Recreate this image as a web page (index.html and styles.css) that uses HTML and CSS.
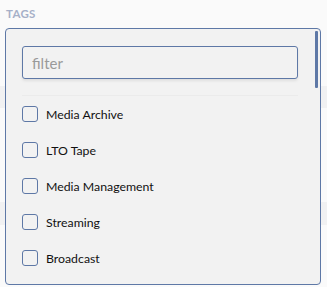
FILE: index.html
```html
<!DOCTYPE html>
<html lang="en">
<head>
  <meta charset="UTF-8" />
  <title>Tags</title>
  <link rel="stylesheet" href="styles.css">
</head>
<body>
  <div class="page">
    <div class="band band-top"></div>
    <div class="band band-bottom"></div>

    <label class="field-label">Tags</label>

    <div class="dropdown">
      <div class="scroll-thumb"></div>
      <div class="filter-wrap">
        <input class="filter" type="text" placeholder="filter" />
      </div>
      <ul class="options">
        <li><span class="box"></span>Media Archive</li>
        <li><span class="box"></span>LTO Tape</li>
        <li><span class="box"></span>Media Management</li>
        <li><span class="box"></span>Streaming</li>
        <li><span class="box"></span>Broadcast</li>
      </ul>
    </div>
  </div>
</body>
</html>
```

FILE: styles.css
```css
body {
  margin: 0;
  background: #fafafa;
  font-family: Lato, "Open Sans", sans-serif;
  color: #111;
}
.page {
  position: relative;
  width: 327px;
  height: 287px;
  overflow: hidden;
  padding: 7px 6px 0 5px;
  box-sizing: border-box;
}
.band {
  position: absolute;
  left: 0;
  right: 0;
  background: #f1f1f2;
}
.band-top {
  top: 86px;
  height: 22px;
}
.band-bottom {
  top: 202px;
  height: 23px;
}
.field-label {
  position: relative;
  display: block;
  margin-left: 1px;
  height: 21px;
  font-size: 11.5px;
  font-weight: bold;
  letter-spacing: 0.3px;
  text-transform: uppercase;
  color: #a6b0c8;
}
.dropdown {
  position: relative;
  background: #f2f2f2;
  border: 1px solid #5e78a6;
  border-radius: 4px;
  height: 257px;
  box-sizing: border-box;
  padding: 17px 0 0 16px;
}
.scroll-thumb {
  position: absolute;
  top: 2px;
  right: 2px;
  width: 3px;
  height: 57px;
  background: #5e78a6;
  border-radius: 1px;
}
.filter-wrap {
  width: 276px;
  padding-bottom: 16px;
  border-bottom: 1px solid #ebebeb;
}
.filter {
  display: block;
  width: 276px;
  height: 33px;
  box-sizing: border-box;
  border: 1px solid #5e78a6;
  border-radius: 3px;
  background: #f2f2f2;
  padding: 0 9px;
  font-family: Lato, sans-serif;
  font-size: 15px;
  color: #333;
  box-shadow: 0 2px 3px rgba(0, 0, 0, 0.08);
  outline: none;
}
.filter::placeholder {
  color: #9a9a9a;
}
.options {
  list-style: none;
  margin: 0;
  padding: 10px 0 0 0;
}
.options li {
  display: flex;
  align-items: center;
  height: 16px;
  margin-bottom: 20px;
  font-size: 12.3px;
}
.box {
  width: 16px;
  height: 16px;
  box-sizing: border-box;
  border: 1.5px solid #5e78a6;
  border-radius: 3px;
  margin-right: 8px;
  flex-shrink: 0;
}
```
